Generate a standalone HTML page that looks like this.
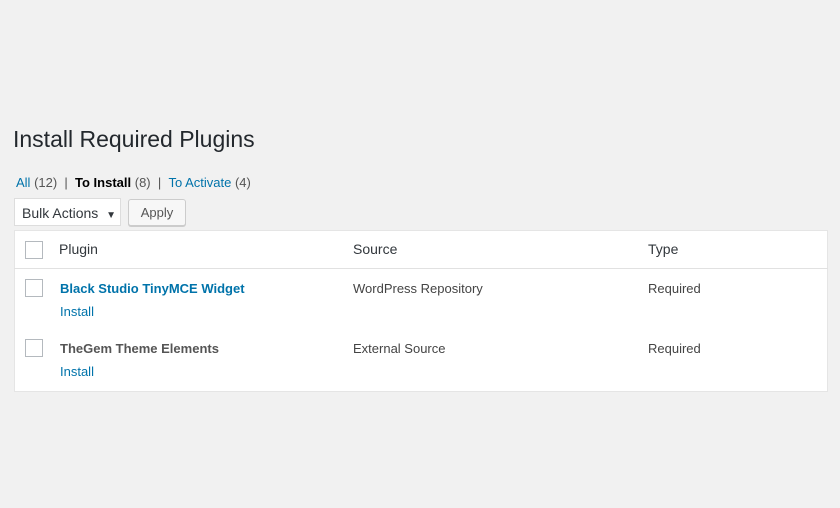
<!DOCTYPE html>
<html><head><style>
body{margin:0;width:840px;height:508px;background:#f1f1f1;font-family:"Liberation Sans",sans-serif;color:#444;position:relative;overflow:hidden}
.a{position:absolute;white-space:nowrap}
h1{position:absolute;left:13px;top:126px;margin:0;font-weight:400;font-size:23px;color:#23282d}
.blue{color:#0073aa}
.cb{position:absolute;width:16px;height:16px;border:1px solid #b4b9be;background:#fff;left:25px}
</style></head><body>
<h1>Install Required Plugins</h1>
<div class="a" style="left:16px;top:175px;font-size:13px;color:#555"><span class="blue">All</span> (12) &nbsp;| &nbsp;<b style="color:#000;font-weight:600">To Install</b> (8) &nbsp;| &nbsp;<span class="blue">To Activate</span> (4)</div>
<div class="a" style="left:14px;top:198px;width:107px;height:28px;background:#fff;border:1px solid #ddd;box-sizing:border-box;font-size:14px;color:#32373c;line-height:28px;padding-left:7px">Bulk Actions <span style="font-size:10px;margin-left:4px">▼</span></div>
<div class="a" style="left:128px;top:199px;width:58px;height:27px;background:#f7f7f7;border:1px solid #ccc;border-radius:3px;box-sizing:border-box;font-size:13px;color:#555;line-height:25px;text-align:center;box-shadow:0 1px 0 #ccc">Apply</div>
<div class="a" style="left:14px;top:230px;width:814px;height:162px;background:#fff;border:1px solid #e5e5e5;box-sizing:border-box"></div>
<div class="a" style="left:14px;top:268px;width:814px;height:1px;background:#e1e1e1"></div>
<div class="cb" style="top:241px"></div>
<div class="a" style="left:59px;top:241px;font-size:14px;color:#32373c">Plugin</div>
<div class="a" style="left:353px;top:241px;font-size:14px;color:#32373c">Source</div>
<div class="a" style="left:648px;top:241px;font-size:14px;color:#32373c">Type</div>
<div class="cb" style="top:279px"></div>
<div class="a blue" style="left:60px;top:281px;font-size:13px;font-weight:700">Black Studio TinyMCE Widget</div>
<div class="a blue" style="left:60px;top:304px;font-size:13px">Install</div>
<div class="a" style="left:353px;top:281px;font-size:13px">WordPress Repository</div>
<div class="a" style="left:648px;top:281px;font-size:13px">Required</div>
<div class="cb" style="top:339px"></div>
<div class="a" style="left:60px;top:341px;font-size:13px;font-weight:700;color:#555">TheGem Theme Elements</div>
<div class="a blue" style="left:60px;top:364px;font-size:13px">Install</div>
<div class="a" style="left:353px;top:341px;font-size:13px">External Source</div>
<div class="a" style="left:648px;top:341px;font-size:13px">Required</div>
</body></html>
